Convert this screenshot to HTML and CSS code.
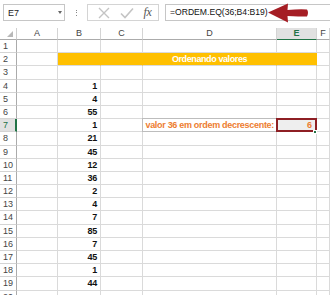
FILE: index.html
```html
<!DOCTYPE html>
<html lang="pt">
<head>
  <meta charset="UTF-8" />
  <title>Ordenando valores</title>
  <link rel="stylesheet" href="styles.css">
</head>
<body>
  <!-- BARRA DE FÓRMULAS -->
  <div class="toolbar">
    <div class="namebox"><span>E7</span><span class="caret"></span></div>
    <div class="dots"><i></i><i></i><i></i></div>
    <div class="fbtns">
      <svg width="14" height="12" viewBox="0 0 14 12"><path d="M2 1 L12 11 M12 1 L2 11" stroke="#c4c4c4" stroke-width="1.4" fill="none"/></svg>
      <svg width="14" height="12" viewBox="0 0 14 12"><path d="M1 6.5 L5 10.5 L13 1.5" stroke="#c4c4c4" stroke-width="1.6" fill="none"/></svg>
      <span class="fx">fx</span>
    </div>
    <div class="formula">=ORDEM.EQ(36;B4:B19)</div>
    <svg class="arrow" width="46" height="22" viewBox="0 0 46 22">
      <path d="M0 9.5 L20 0.5 L19.5 7 Q31 6 39 6.5 Q41 9.5 39 13.5 Q31 13.5 19.5 13 L20 19.5 Z" fill="#a51d24"/>
    </svg>
  </div>

  <!-- PLANILHA -->
  <div class="sheet" id="sheet"></div>
  <div class="handle"></div>

  <script>
    const letras = ['A', 'B', 'C', 'D', 'E', 'F'];
    const valores = [1, 4, 55, 1, 21, 45, 12, 36, 2, 4, 7, 85, 7, 45, 1, 44];
    const sheet = document.getElementById('sheet');

    function cell(cls, text) {
      const d = document.createElement('div');
      d.className = cls;
      if (text !== undefined) d.textContent = text;
      sheet.appendChild(d);
      return d;
    }

    cell('corner');
    letras.forEach(l => cell(l === 'E' ? 'colhead sel' : 'colhead', l));

    for (let r = 1; r <= 20; r++) {
      cell(r === 7 ? 'rowhead sel' : 'rowhead', r);
      letras.forEach(l => {
        let cls = 'cell';
        let text = '';
        if (r === 2 && 'BCDE'.includes(l)) cls += ' band';
        if (r === 2 && l === 'D') text = 'Ordenando valores';
        if (l === 'B' && r >= 4) { cls += ' num'; text = valores[r - 4]; }
        if (r === 7 && l === 'D') { cls += ' label'; text = 'valor 36 em ordem decrescente:'; }
        if (r === 7 && l === 'E') { cls += ' result'; text = '6'; }
        cell(cls, text);
      });
    }
  </script>
</body>
</html>
```

FILE: styles.css
```css
* {
  box-sizing: border-box;
}

body {
  margin: 0;
  background: white;
  font-family: 'Liberation Sans', Arial, sans-serif;
  overflow: hidden;
  position: relative;
}

/* barra de fórmulas */
.toolbar {
  height: 28px;
  display: flex;
  align-items: flex-start;
  padding-top: 4px;
  position: relative;
}

.namebox {
  margin-left: 3px;
  width: 62px;
  height: 17px;
  border: 1px solid #c6c6c6;
  display: flex;
  align-items: center;
  justify-content: space-between;
  padding: 0 2px 0 4px;
  font-size: 9px;
  color: #222;
}

.caret {
  width: 0;
  height: 0;
  border-left: 2.5px solid transparent;
  border-right: 2.5px solid transparent;
  border-top: 3px solid #666;
}

.dots {
  width: 22px;
  height: 17px;
  display: flex;
  flex-direction: column;
  align-items: center;
  justify-content: center;
  gap: 1.5px;
}

.dots i {
  width: 1px;
  height: 1px;
  background: #888;
}

.fbtns {
  width: 72px;
  height: 17px;
  border: 1px solid #d4d4d4;
  display: flex;
  align-items: center;
  justify-content: space-around;
  padding: 0 2px 0 4px;
}

.fx {
  font-family: 'Liberation Serif', serif;
  font-style: italic;
  font-size: 12px;
  color: #555;
  letter-spacing: -0.5px;
}

.formula {
  margin-left: 6px;
  flex: 1;
  height: 17px;
  border: 1px solid #c6c6c6;
  border-right: none;
  padding-left: 4px;
  font-size: 8.6px;
  line-height: 15px;
  color: #111;
}

.arrow {
  position: absolute;
  left: 268px;
  top: 3px;
}

/* planilha */
.sheet {
  display: grid;
  grid-template-columns: 17px 41px 43px 42px 134px 40px 1fr;
  grid-template-rows: 12px;
  grid-auto-rows: 13.2px;
}

.corner,
.colhead,
.rowhead,
.cell {
  border-right: 1px solid #dadada;
  border-bottom: 1px solid #dadada;
  overflow: visible;
  white-space: nowrap;
}

.corner {
  position: relative;
  border-right-color: #cfcfcf;
  border-bottom-color: #ababab;
}

.corner::after {
  content: '';
  position: absolute;
  left: 7px;
  top: 3px;
  width: 0;
  height: 0;
  border-left: 6px solid transparent;
  border-bottom: 6px solid #b8b8b8;
}

.colhead {
  font-size: 9px;
  line-height: 11px;
  text-align: center;
  color: #444;
  border-bottom-color: #ababab;
  border-right-color: #d4d4d4;
}

.colhead.sel {
  background: #e1e1e1;
  color: #217346;
  font-weight: bold;
  border-bottom: 1px solid #217346;
}

.rowhead {
  font-size: 9px;
  line-height: 12px;
  padding-left: 3px;
  color: #444;
  border-right-color: #ababab;
  border-bottom-color: #d4d4d4;
}

.rowhead.sel {
  background: #e1e1e1;
  color: #217346;
  border-right: 2px solid #217346;
}

.cell {
  font-size: 9px;
  line-height: 12.5px;
  font-weight: bold;
}

.band {
  background: #ffc000;
  border-right-color: #ffc000;
  color: white;
  text-align: center;
  letter-spacing: -0.4px;
}

.num {
  text-align: right;
  padding-right: 3px;
  color: #111;
  letter-spacing: -0.3px;
}

.label {
  text-align: right;
  padding-right: 2px;
  color: #ed7d31;
  border: 1px solid #bdbdbd;
  margin: -1px 0 0 -1px;
  letter-spacing: -0.3px;
}

.result {
  text-align: right;
  padding-right: 3px;
  color: #ed7d31;
  background: #eeeeee;
  border: 2px solid #8e1f24;
  margin: -1px 0 0 -1px;
  line-height: 10.5px;
}

.handle {
  position: absolute;
  left: 313px;
  top: 130px;
  width: 4px;
  height: 4px;
  background: #217346;
  border: 1px solid white;
}
```
